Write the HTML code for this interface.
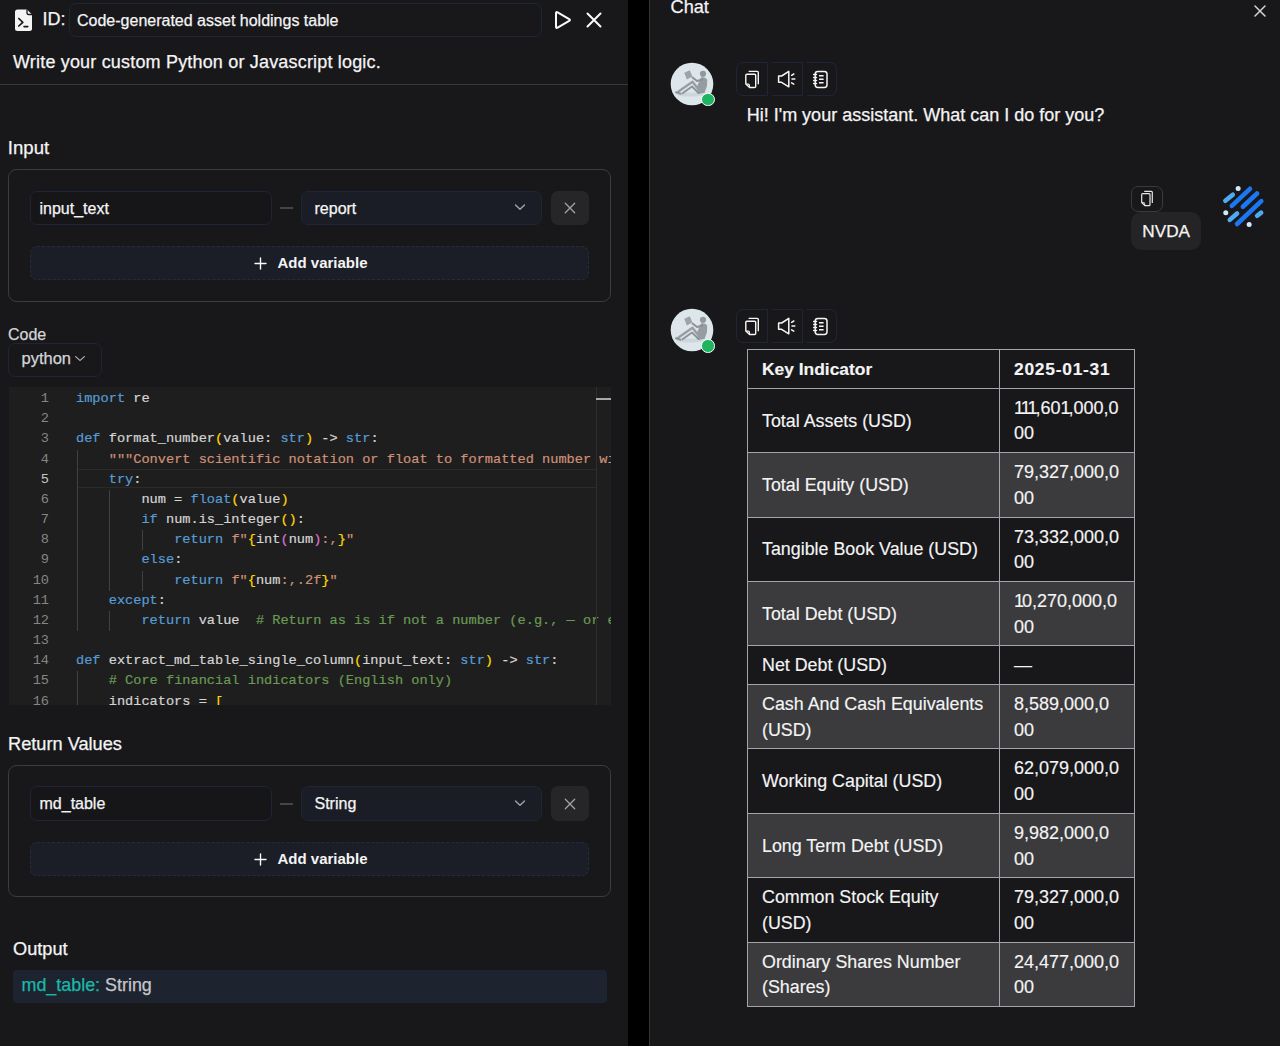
<!DOCTYPE html>
<html><head><meta charset="utf-8">
<style>
*{box-sizing:border-box;margin:0;padding:0}
html,body{width:1280px;height:1046px;overflow:hidden;background:#000;font-family:"Liberation Sans",sans-serif;color:#fafafa}
.abs{position:absolute}
.t{position:absolute;line-height:1;white-space:pre;-webkit-text-stroke:0.25px currentColor}
table.kt{-webkit-text-stroke:0.15px currentColor}
#left{position:absolute;left:0;top:0;width:628px;height:1046px;background:#18181b;overflow:hidden}
#chat{position:absolute;left:650px;top:0;width:630px;height:1046px;background:#18181b;overflow:hidden}
#vline{position:absolute;left:649px;top:0;width:1px;height:1046px;background:#333336}
.inp{position:absolute;border:1px solid #1e2635;border-radius:7px;background:#161619}
.sel{position:absolute;border:1px solid #1e2635;border-radius:7px;background:#1a1d25}
.xbtn{position:absolute;background:#262628;border-radius:7px}
.addv{position:absolute;border:1px dashed #232c3b;border-radius:7px;background:#1b1e26}
.card{position:absolute;border:1px solid #3d3d3f;border-radius:8.5px}
.dash{position:absolute;height:2px;background:#454549}
#code{position:absolute;left:9px;top:387px;width:602px;height:318px;background:#1e1e1e;overflow:hidden}
.ln{position:absolute;left:0;width:40px;text-align:right;font-family:"Liberation Mono",monospace;font-size:13.64px;line-height:20px;color:#858585;white-space:pre}
.cl{position:absolute;left:67px;font-family:"Liberation Mono",monospace;font-size:13.64px;line-height:20px;color:#d4d4d4;white-space:pre;-webkit-text-stroke:0.2px currentColor}
.k{color:#569cd6}.s{color:#ce9178}.c{color:#6a9955}.b1{color:#ffd700}.b2{color:#da70d6}
.guide{position:absolute;width:1px;background:#404040}
.tb{position:absolute;height:34px;width:101px}
.tbb{position:absolute;top:0;height:34px;border:1px solid #1e2635}
table.kt{position:absolute;table-layout:fixed;left:747px;top:349px;border-collapse:collapse;font-size:17.85px;line-height:25.7px;color:#f4f4f5}
table.kt td,table.kt th{border:1px solid #a0a6ac;padding:7px 14px 5px;text-align:left;vertical-align:middle}
table.kt th{font-weight:700;font-size:17.4px;padding-top:6.5px;padding-bottom:5.5px}
table.kt td.v{font-size:18px}
.n1{letter-spacing:-2px}
table.kt th+th{letter-spacing:0.75px}
table.kt tr.g td{background:#3b3b3d}
table.kt tr.d td,table.kt tr.h th{background:#18181b}
</style></head>
<body>
<div id="left">
  <!-- header icon -->
  <svg class="abs" style="left:14px;top:8px" width="20" height="24" viewBox="0 0 20 24">
    <path d="M3.5 1.5 H13 L18 6.5 V20.5 Q18 23 15.5 23 H3.5 Q1 23 1 20.5 V4 Q1 1.5 3.5 1.5Z" fill="#f4f4f5"/>
    <path d="M13 1.5 V5 Q13 6.5 14.5 6.5 H18" fill="none" stroke="#18181b" stroke-width="1.3"/>
    <path d="M4.8 10.5 L8.8 14.3 L4.8 18" fill="none" stroke="#18181b" stroke-width="1.7" stroke-linecap="round" stroke-linejoin="round"/>
    <path d="M10 18.6 H13.8" stroke="#18181b" stroke-width="1.6" stroke-linecap="round"/>
  </svg>
  <div class="t" style="left:42.5px;top:10.4px;font-size:18px;color:#f4f4f5">ID:</div>
  <div class="inp" style="left:69px;top:3px;width:473px;height:34px;background:#18181b"></div>
  <div class="t" style="left:77px;top:12.7px;font-size:16px;color:#f4f4f5">Code-generated asset holdings table</div>
  <svg class="abs" style="left:552px;top:9px" width="22" height="22" viewBox="0 0 22 22">
    <path d="M4 4.2 Q4 2.5 5.6 3.4 L17.2 10.1 Q18.6 11 17.2 11.9 L5.6 18.6 Q4 19.5 4 17.8Z" fill="none" stroke="#fafafa" stroke-width="2" stroke-linejoin="round"/>
  </svg>
  <svg class="abs" style="left:584px;top:10px" width="20" height="20" viewBox="0 0 20 20">
    <path d="M3.5 3.5 L16.5 16.5 M16.5 3.5 L3.5 16.5" stroke="#fafafa" stroke-width="2" stroke-linecap="round"/>
  </svg>
  <div class="t" style="left:13px;top:53.2px;font-size:18px;letter-spacing:0.18px;color:#f4f4f5">Write your custom Python or Javascript logic.</div>
  <div class="abs" style="left:0;top:83.5px;width:628px;height:1px;background:#38383b"></div>

  <div class="t" style="left:7.8px;top:138.6px;font-size:18.6px;color:#f4f4f5">Input</div>
  <div class="card" style="left:8px;top:169px;width:603px;height:133px"></div>
  <div class="inp" style="left:30px;top:191px;width:242px;height:34px"></div>
  <div class="t" style="left:39.5px;top:201px;font-size:16px;color:#f4f4f5">input_text</div>
  <div class="dash" style="left:280px;top:207px;width:13px"></div>
  <div class="sel" style="left:301px;top:191px;width:241px;height:34px"></div>
  <div class="t" style="left:314.5px;top:201px;font-size:16px;color:#f4f4f5">report</div>
  <svg class="abs" style="left:513px;top:202px" width="14" height="10" viewBox="0 0 14 10"><path d="M2.5 3 L7 7.3 L11.5 3" fill="none" stroke="#9ca3af" stroke-width="1.4" stroke-linecap="round" stroke-linejoin="round"/></svg>
  <div class="xbtn" style="left:551px;top:191px;width:38px;height:34px"></div>
  <svg class="abs" style="left:563px;top:201px" width="14" height="14" viewBox="0 0 14 14"><path d="M2.3 2.3 L11.7 11.7 M11.7 2.3 L2.3 11.7" stroke="#a1a1aa" stroke-width="1.3" stroke-linecap="round"/></svg>
  <div class="addv" style="left:30px;top:246px;width:559px;height:34px"></div>
  <svg class="abs" style="left:253px;top:256px" width="15" height="15" viewBox="0 0 15 15"><path d="M7.5 2 V13 M2 7.5 H13" stroke="#fafafa" stroke-width="1.4" stroke-linecap="round"/></svg>
  <div class="t" style="left:277.5px;top:255.2px;font-size:15px;font-weight:700;-webkit-text-stroke:0;color:#f4f4f5">Add variable</div>

  <div class="t" style="left:8px;top:327.2px;font-size:16px;color:#d4d4d8">Code</div>
  <div class="inp" style="left:8px;top:342.5px;width:94px;height:34px;background:#18181b"></div>
  <div class="t" style="left:21.5px;top:350px;font-size:16.5px;color:#d4d4d8">python</div>
  <svg class="abs" style="left:74px;top:354px" width="12" height="9" viewBox="0 0 12 9"><path d="M1.5 2.5 L6 6.5 L10.5 2.5" fill="none" stroke="#a1a1aa" stroke-width="1.1" stroke-linecap="round" stroke-linejoin="round"/></svg>

  <div id="code"><div style="position:absolute;left:0;top:2px;width:602px;height:318px">
    <div class="abs" style="left:68px;top:79.68px;width:519px;height:19.5px;border-top:1.5px solid #2b2b2b;border-bottom:1.5px solid #2b2b2b"></div>
    <div class="guide" style="left:68px;top:60.51px;height:181.53px"></div>
    <div class="guide" style="left:68px;top:282.38px;height:40.34px"></div>
    <div class="guide" style="left:100px;top:100.85px;height:100.85px"></div>
    <div class="guide" style="left:100px;top:221.87px;height:20.17px"></div>
    <div class="guide" style="left:133px;top:141.19px;height:20.17px"></div>
    <div class="guide" style="left:133px;top:181.53px;height:20.17px"></div>
    <div class="ln" style="top:0.00px;color:#858585">1</div>
    <div class="cl" style="top:0.00px"><span class="k">import</span> re</div>
    <div class="ln" style="top:20.17px;color:#858585">2</div>
    <div class="cl" style="top:20.17px"></div>
    <div class="ln" style="top:40.34px;color:#858585">3</div>
    <div class="cl" style="top:40.34px"><span class="k">def</span> format_number<span class="b1">(</span>value: <span class="k">str</span><span class="b1">)</span> -&gt; <span class="k">str</span>:</div>
    <div class="ln" style="top:60.51px;color:#858585">4</div>
    <div class="cl" style="top:60.51px">    <span class="s">"""Convert scientific notation or float to formatted number with commas."""</span></div>
    <div class="ln" style="top:80.68px;color:#c6c6c6">5</div>
    <div class="cl" style="top:80.68px">    <span class="k">try</span>:</div>
    <div class="ln" style="top:100.85px;color:#858585">6</div>
    <div class="cl" style="top:100.85px">        num = <span class="k">float</span><span class="b1">(</span>value<span class="b1">)</span></div>
    <div class="ln" style="top:121.02px;color:#858585">7</div>
    <div class="cl" style="top:121.02px">        <span class="k">if</span> num.is_integer<span class="b1">()</span>:</div>
    <div class="ln" style="top:141.19px;color:#858585">8</div>
    <div class="cl" style="top:141.19px">            <span class="k">return</span> <span class="s">f"</span><span class="b1">{</span>int<span class="b2">(</span>num<span class="b2">)</span><span class="s">:,</span><span class="b1">}</span><span class="s">"</span></div>
    <div class="ln" style="top:161.36px;color:#858585">9</div>
    <div class="cl" style="top:161.36px">        <span class="k">else</span>:</div>
    <div class="ln" style="top:181.53px;color:#858585">10</div>
    <div class="cl" style="top:181.53px">            <span class="k">return</span> <span class="s">f"</span><span class="b1">{</span>num<span class="s">:,.2f</span><span class="b1">}</span><span class="s">"</span></div>
    <div class="ln" style="top:201.70px;color:#858585">11</div>
    <div class="cl" style="top:201.70px">    <span class="k">except</span>:</div>
    <div class="ln" style="top:221.87px;color:#858585">12</div>
    <div class="cl" style="top:221.87px">        <span class="k">return</span> value  <span class="c"># Return as is if not a number (e.g., — or empty)</span></div>
    <div class="ln" style="top:242.04px;color:#858585">13</div>
    <div class="cl" style="top:242.04px"></div>
    <div class="ln" style="top:262.21px;color:#858585">14</div>
    <div class="cl" style="top:262.21px"><span class="k">def</span> extract_md_table_single_column<span class="b1">(</span>input_text: <span class="k">str</span><span class="b1">)</span> -&gt; <span class="k">str</span>:</div>
    <div class="ln" style="top:282.38px;color:#858585">15</div>
    <div class="cl" style="top:282.38px">    <span class="c"># Core financial indicators (English only)</span></div>
    <div class="ln" style="top:302.55px;color:#858585">16</div>
    <div class="cl" style="top:302.55px">    indicators = <span class="b1">[</span></div>
    <div class="abs" style="left:587px;top:-2px;width:1px;height:320px;background:#2e2e2e"></div>
    <div class="abs" style="left:587px;top:9px;width:15px;height:2px;background:#a8a8a8"></div>
  </div></div>

  <div class="t" style="left:8px;top:734.6px;font-size:18.2px;color:#f4f4f5">Return Values</div>
  <div class="card" style="left:8px;top:764.5px;width:603px;height:132px"></div>
  <div class="inp" style="left:30px;top:786px;width:242px;height:34.5px"></div>
  <div class="t" style="left:39.5px;top:796px;font-size:16px;color:#f4f4f5">md_table</div>
  <div class="dash" style="left:280px;top:802.5px;width:13px"></div>
  <div class="sel" style="left:301px;top:786px;width:241px;height:34.5px"></div>
  <div class="t" style="left:314.5px;top:796px;font-size:16px;color:#f4f4f5">String</div>
  <svg class="abs" style="left:513px;top:797.5px" width="14" height="10" viewBox="0 0 14 10"><path d="M2.5 3 L7 7.3 L11.5 3" fill="none" stroke="#9ca3af" stroke-width="1.4" stroke-linecap="round" stroke-linejoin="round"/></svg>
  <div class="xbtn" style="left:551px;top:786px;width:38px;height:34.5px"></div>
  <svg class="abs" style="left:563px;top:796.5px" width="14" height="14" viewBox="0 0 14 14"><path d="M2.3 2.3 L11.7 11.7 M11.7 2.3 L2.3 11.7" stroke="#a1a1aa" stroke-width="1.3" stroke-linecap="round"/></svg>
  <div class="addv" style="left:30px;top:842px;width:559px;height:33.5px"></div>
  <svg class="abs" style="left:253px;top:851.5px" width="15" height="15" viewBox="0 0 15 15"><path d="M7.5 2 V13 M2 7.5 H13" stroke="#fafafa" stroke-width="1.4" stroke-linecap="round"/></svg>
  <div class="t" style="left:277.5px;top:851.2px;font-size:15px;font-weight:700;-webkit-text-stroke:0;color:#f4f4f5">Add variable</div>

  <div class="t" style="left:13px;top:939.6px;font-size:18.2px;color:#f4f4f5">Output</div>
  <div class="abs" style="left:13px;top:970px;width:593.5px;height:33px;background:#1d242f;border-radius:4px"></div>
  <div class="t" style="left:21.5px;top:977.4px;font-size:17.9px;color:#c6c6cb"><span style="color:#1ab8ac">md_table:</span> String</div>
</div>
<div id="vline"></div>
<div id="chat">

<div class="t" style="left:20.5px;top:-1.8px;font-size:18.2px;color:#f4f4f5">Chat</div>
<svg class="abs" style="left:603px;top:4px" width="14" height="14" viewBox="0 0 14 14"><path d="M2 2 L12 12 M12 2 L2 12" stroke="#d4d4d8" stroke-width="1.5" stroke-linecap="round"/></svg>
<svg class="abs" style="left:20px;top:61.5px" width="46" height="46" viewBox="0 0 46 46">
  <circle cx="22" cy="22" r="21.3" fill="#dde7eb"/>
  <ellipse cx="20" cy="32.5" rx="13" ry="2" fill="#cdd6da"/>
  <circle cx="33" cy="11.8" r="3.1" fill="#92989b"/>
  <path d="M31 15.2 Q35.5 14.8 37.2 17.5 L37 24 L34.5 31 L28 32 L27 24.5Z" fill="#969c9f"/>
  <path d="M32.5 17.5 L27 19 L22.5 15.5" fill="none" stroke="#8a9093" stroke-width="1.9" stroke-linecap="round" stroke-linejoin="round"/>
  <path d="M14.3 10.8 L19.8 8.2 L22.3 14.6 L16.8 17.4Z" fill="#9da3a6"/>
  <path d="M30 29.5 L22.5 19.8 L8.5 29.5" fill="none" stroke="#989ea1" stroke-width="2.4" stroke-linecap="round" stroke-linejoin="round"/>
  <path d="M28.5 31 L22 24.5 L12.5 31.3" fill="none" stroke="#8c9295" stroke-width="1.8" stroke-linecap="round" stroke-linejoin="round"/>
  <path d="M6 30.2 L10.5 31.6" stroke="#8a9093" stroke-width="2" stroke-linecap="round"/>
</svg>
<div class="abs" style="left:51.3px;top:92.8px;width:13.4px;height:13.4px;border-radius:50%;background:#1fb45f;border:1.8px solid #ffffff"></div>
<div class="abs" style="left:86px;top:62px;width:101px;height:34px">
  <div class="tbb" style="left:0;width:32px;border-radius:7px 0 0 7px"></div>
  <div class="tbb" style="left:36px;width:31px;border-left:none"></div>
  <div class="tbb" style="left:71px;width:30px;border-left:none;border-radius:0 7px 7px 0"></div>
  <svg class="abs" style="left:7px;top:7px" width="18" height="21" viewBox="0 0 18 21">
    <path d="M5.6 2.4 H14.2 Q15.3 2.4 15.3 3.5 V15.2" fill="none" stroke="#f5f5f5" stroke-width="1.4"/>
    <path d="M3.9 5.2 H11.6 Q12.7 5.2 12.7 6.3 V17.4 Q12.7 18.5 11.6 18.5 H6.6 L2.8 15 V6.3 Q2.8 5.2 3.9 5.2Z" fill="none" stroke="#f5f5f5" stroke-width="1.4" stroke-linejoin="round"/>
    <path d="M3 15.1 H5.3 Q6.4 15.1 6.4 16.2 V18.3" fill="none" stroke="#f5f5f5" stroke-width="1.2"/>
  </svg>
  <svg class="abs" style="left:40px;top:7px" width="22" height="21" viewBox="0 0 22 21">
    <path d="M2.6 7 H5.6 L12.8 2.4 V17.8 L5.6 13.3 H2.6 Z" fill="none" stroke="#f5f5f5" stroke-width="1.5" stroke-linejoin="round"/>
    <path d="M15.6 6.3 L17.8 5 M16 10.1 H18.8 M15.6 13.9 L17.8 15.2" stroke="#f5f5f5" stroke-width="1.5" stroke-linecap="round"/>
  </svg>
  <svg class="abs" style="left:75px;top:7px" width="20" height="21" viewBox="0 0 20 21">
    <rect x="4.2" y="2.4" width="11.8" height="16" rx="2.6" fill="none" stroke="#f5f5f5" stroke-width="1.5"/>
    <path d="M2.6 5.5 H5.6 M2.6 8.5 H5.6 M2.6 11.5 H5.6 M2.6 14.5 H5.6" stroke="#f5f5f5" stroke-width="1.3" stroke-linecap="round"/>
    <path d="M8 6.8 H12.6 M8 10.3 H12.6 M8 13.8 H12.6" stroke="#f5f5f5" stroke-width="1.4"/>
  </svg>
</div>
<div class="t" style="left:96.7px;top:105.6px;font-size:18px;color:#f4f4f5">Hi! I'm your assistant. What can I do for you?</div>
<div class="abs" style="left:481px;top:186px;width:32px;height:25.5px;border:1px solid #3a3a3c;border-radius:7px"></div>
<svg class="abs" style="left:488px;top:188px" width="18" height="21" viewBox="0 0 18 21">
    <path d="M6.2 3.4 H13.4 Q14.3 3.4 14.3 4.3 V15" fill="none" stroke="#e5e5e5" stroke-width="1.2"/>
    <path d="M4.6 5.6 H11.1 Q12 5.6 12 6.5 V16.8 Q12 17.7 11.1 17.7 H7 L3.7 14.5 V6.5 Q3.7 5.6 4.6 5.6Z" fill="none" stroke="#e5e5e5" stroke-width="1.2" stroke-linejoin="round"/>
    <path d="M3.8 14.6 H5.8 Q6.7 14.6 6.7 15.5 V17.5" fill="none" stroke="#e5e5e5" stroke-width="1"/>
</svg>
<div class="abs" style="left:481px;top:212px;width:69.5px;height:37.5px;background:#242426;border-radius:10px"></div>
<div class="t" style="left:492.3px;top:223px;font-size:17.2px;color:#f4f4f5">NVDA</div>
<svg class="abs" style="left:565px;top:180px" width="55" height="55" viewBox="0 0 55 55"><circle cx="23.13" cy="8.41" r="2.5" fill="#d2e9fb"/><circle cx="10.78" cy="32.86" r="2.5" fill="#d2e9fb"/><circle cx="34.17" cy="44.43" r="2.5" fill="#d2e9fb"/><line x1="10.35" y1="20.77" x2="17.78" y2="14.72" stroke="#4eaaf2" stroke-width="4.6" stroke-linecap="round"/><line x1="14.76" y1="39.88" x2="22.05" y2="33.46" stroke="#4eaaf2" stroke-width="4.6" stroke-linecap="round"/><line x1="42.17" y1="35.77" x2="46.16" y2="32.58" stroke="#4eaaf2" stroke-width="4.6" stroke-linecap="round"/><line x1="16.81" y1="25.89" x2="34.98" y2="8.81" stroke="#1b78f2" stroke-width="4.6" stroke-linecap="round"/><line x1="27.86" y1="26.69" x2="42.07" y2="13.53" stroke="#1b78f2" stroke-width="4.6" stroke-linecap="round"/><line x1="22.06" y1="44.03" x2="46.29" y2="21.17" stroke="#1b78f2" stroke-width="4.6" stroke-linecap="round"/></svg>
<svg class="abs" style="left:20px;top:308px" width="46" height="46" viewBox="0 0 46 46">
  <circle cx="22" cy="22" r="21.3" fill="#dde7eb"/>
  <ellipse cx="20" cy="32.5" rx="13" ry="2" fill="#cdd6da"/>
  <circle cx="33" cy="11.8" r="3.1" fill="#92989b"/>
  <path d="M31 15.2 Q35.5 14.8 37.2 17.5 L37 24 L34.5 31 L28 32 L27 24.5Z" fill="#969c9f"/>
  <path d="M32.5 17.5 L27 19 L22.5 15.5" fill="none" stroke="#8a9093" stroke-width="1.9" stroke-linecap="round" stroke-linejoin="round"/>
  <path d="M14.3 10.8 L19.8 8.2 L22.3 14.6 L16.8 17.4Z" fill="#9da3a6"/>
  <path d="M30 29.5 L22.5 19.8 L8.5 29.5" fill="none" stroke="#989ea1" stroke-width="2.4" stroke-linecap="round" stroke-linejoin="round"/>
  <path d="M28.5 31 L22 24.5 L12.5 31.3" fill="none" stroke="#8c9295" stroke-width="1.8" stroke-linecap="round" stroke-linejoin="round"/>
  <path d="M6 30.2 L10.5 31.6" stroke="#8a9093" stroke-width="2" stroke-linecap="round"/>
</svg>
<div class="abs" style="left:51.3px;top:339.3px;width:13.4px;height:13.4px;border-radius:50%;background:#1fb45f;border:1.8px solid #ffffff"></div>
<div class="abs" style="left:86px;top:309px;width:101px;height:34px">
  <div class="tbb" style="left:0;width:32px;border-radius:7px 0 0 7px"></div>
  <div class="tbb" style="left:36px;width:31px;border-left:none"></div>
  <div class="tbb" style="left:71px;width:30px;border-left:none;border-radius:0 7px 7px 0"></div>
  <svg class="abs" style="left:7px;top:7px" width="18" height="21" viewBox="0 0 18 21">
    <path d="M5.6 2.4 H14.2 Q15.3 2.4 15.3 3.5 V15.2" fill="none" stroke="#f5f5f5" stroke-width="1.4"/>
    <path d="M3.9 5.2 H11.6 Q12.7 5.2 12.7 6.3 V17.4 Q12.7 18.5 11.6 18.5 H6.6 L2.8 15 V6.3 Q2.8 5.2 3.9 5.2Z" fill="none" stroke="#f5f5f5" stroke-width="1.4" stroke-linejoin="round"/>
    <path d="M3 15.1 H5.3 Q6.4 15.1 6.4 16.2 V18.3" fill="none" stroke="#f5f5f5" stroke-width="1.2"/>
  </svg>
  <svg class="abs" style="left:40px;top:7px" width="22" height="21" viewBox="0 0 22 21">
    <path d="M2.6 7 H5.6 L12.8 2.4 V17.8 L5.6 13.3 H2.6 Z" fill="none" stroke="#f5f5f5" stroke-width="1.5" stroke-linejoin="round"/>
    <path d="M15.6 6.3 L17.8 5 M16 10.1 H18.8 M15.6 13.9 L17.8 15.2" stroke="#f5f5f5" stroke-width="1.5" stroke-linecap="round"/>
  </svg>
  <svg class="abs" style="left:75px;top:7px" width="20" height="21" viewBox="0 0 20 21">
    <rect x="4.2" y="2.4" width="11.8" height="16" rx="2.6" fill="none" stroke="#f5f5f5" stroke-width="1.5"/>
    <path d="M2.6 5.5 H5.6 M2.6 8.5 H5.6 M2.6 11.5 H5.6 M2.6 14.5 H5.6" stroke="#f5f5f5" stroke-width="1.3" stroke-linecap="round"/>
    <path d="M8 6.8 H12.6 M8 10.3 H12.6 M8 13.8 H12.6" stroke="#f5f5f5" stroke-width="1.4"/>
  </svg>
</div>
<table class="kt" style="left:97px;width:387px">
<colgroup><col style="width:252px"><col style="width:135px"></colgroup>
<tr class="h"><th>Key Indicator</th><th>2025-01-31</th></tr>
<tr class="d"><td>Total Assets (USD)</td><td class="v"><span class="n1">1</span><span class="n1">1</span><span class="n1">1</span>,60<span class="n1">1</span>,000,0<br>00</td></tr>
<tr class="g"><td>Total Equity (USD)</td><td class="v">79,327,000,0<br>00</td></tr>
<tr class="d"><td>Tangible Book Value (USD)</td><td class="v">73,332,000,0<br>00</td></tr>
<tr class="g"><td>Total Debt (USD)</td><td class="v"><span class="n1">1</span>0,270,000,0<br>00</td></tr>
<tr class="d"><td>Net Debt (USD)</td><td class="v">—</td></tr>
<tr class="g"><td>Cash And Cash Equivalents<br>(USD)</td><td class="v">8,589,000,0<br>00</td></tr>
<tr class="d"><td>Working Capital (USD)</td><td class="v">62,079,000,0<br>00</td></tr>
<tr class="g"><td>Long Term Debt (USD)</td><td class="v">9,982,000,0<br>00</td></tr>
<tr class="d"><td>Common Stock Equity<br>(USD)</td><td class="v">79,327,000,0<br>00</td></tr>
<tr class="g"><td>Ordinary Shares Number<br>(Shares)</td><td class="v">24,477,000,0<br>00</td></tr>
</table>

</div>
</body></html>
